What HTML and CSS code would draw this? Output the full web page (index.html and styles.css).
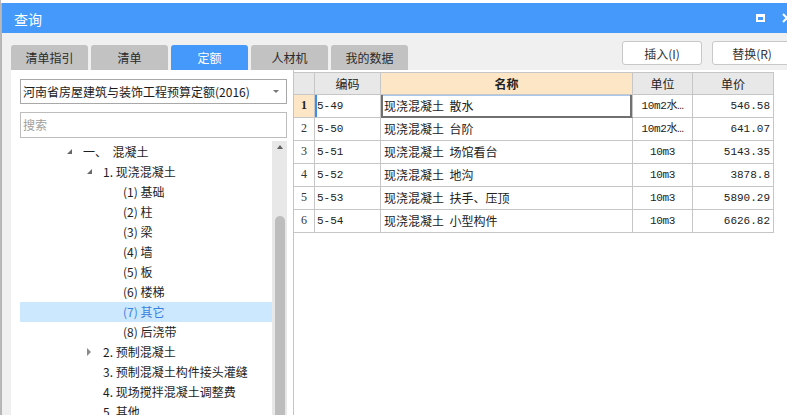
FILE: index.html
```html
<!DOCTYPE html>
<html lang="zh-CN">
<head>
<meta charset="utf-8">
<title>查询</title>
<link rel="stylesheet" href="styles.css">
</head>
<body>
<div class="desk">
  <div class="win">
    <div class="titlebar">
      <span class="title">查询</span>
      <span class="tb-icons">
        <span class="ico-restore"></span>
        <svg class="ico-close" width="10" height="10" viewBox="0 0 10 10"><path d="M1 1 L9 9 M9 1 L1 9" stroke="#fff" stroke-width="2" fill="none"/></svg>
      </span>
    </div>
    <div class="win-body">
      <div class="toprow">
        <div class="tabs">
          <div class="tab">清单指引</div>
          <div class="tab">清单</div>
          <div class="tab active">定额</div>
          <div class="tab">人材机</div>
          <div class="tab">我的数据</div>
        </div>
        <div class="actions">
          <button class="btn">插入(I)</button>
          <button class="btn">替换(R)</button>
        </div>
      </div>
      <div class="main">
        <div class="left">
          <div class="select"><span class="select-text">河南省房屋建筑与装饰工程预算定额(2016)</span><span class="caret"></span></div>
          <div class="search">搜索</div>
          <div class="treewrap">
            <div class="tree">
              <div class="node lv0"><span class="tg"><i class="tri-open"></i></span>一、&nbsp;&nbsp;混凝土</div>
              <div class="node lv1"><span class="tg"><i class="tri-open"></i></span>1. 现浇混凝土</div>
              <div class="node lv2"><span class="tg"></span>(1) 基础</div>
              <div class="node lv2"><span class="tg"></span>(2) 柱</div>
              <div class="node lv2"><span class="tg"></span>(3) 梁</div>
              <div class="node lv2"><span class="tg"></span>(4) 墙</div>
              <div class="node lv2"><span class="tg"></span>(5) 板</div>
              <div class="node lv2"><span class="tg"></span>(6) 楼梯</div>
              <div class="node lv2 selected"><span class="tg"></span>(7) 其它</div>
              <div class="node lv2"><span class="tg"></span>(8) 后浇带</div>
              <div class="node lv1"><span class="tg"><i class="tri-closed"></i></span>2. 预制混凝土</div>
              <div class="node lv1"><span class="tg"></span>3. 预制混凝土构件接头灌缝</div>
              <div class="node lv1"><span class="tg"></span>4. 现场搅拌混凝土调整费</div>
              <div class="node lv1"><span class="tg"></span>5. 其他</div>
            </div>
            <div class="vscroll">
              <span class="up"></span>
              <span class="thumb"></span>
            </div>
          </div>
        </div>
        <div class="right">
          <div class="grid">
            <div class="hc"></div>
            <div class="hc">编码</div>
            <div class="hc hc-sel">名称</div>
            <div class="hc">单位</div>
            <div class="hc">单价</div>

            <div class="c num num-sel">1</div>
            <div class="c code code-focus">5-49</div>
            <div class="c name name-sel">现浇混凝土&nbsp;&nbsp;散水</div>
            <div class="c unit">10m2水…</div>
            <div class="c price">546.58</div>

            <div class="c num">2</div>
            <div class="c code">5-50</div>
            <div class="c name">现浇混凝土&nbsp;&nbsp;台阶</div>
            <div class="c unit">10m2水…</div>
            <div class="c price">641.07</div>

            <div class="c num">3</div>
            <div class="c code">5-51</div>
            <div class="c name">现浇混凝土&nbsp;&nbsp;场馆看台</div>
            <div class="c unit">10m3</div>
            <div class="c price">5143.35</div>

            <div class="c num">4</div>
            <div class="c code">5-52</div>
            <div class="c name">现浇混凝土&nbsp;&nbsp;地沟</div>
            <div class="c unit">10m3</div>
            <div class="c price">3878.8</div>

            <div class="c num">5</div>
            <div class="c code">5-53</div>
            <div class="c name">现浇混凝土&nbsp;&nbsp;扶手、压顶</div>
            <div class="c unit">10m3</div>
            <div class="c price">5890.29</div>

            <div class="c num">6</div>
            <div class="c code">5-54</div>
            <div class="c name">现浇混凝土&nbsp;&nbsp;小型构件</div>
            <div class="c unit">10m3</div>
            <div class="c price">6626.82</div>
          </div>
        </div>
      </div>
    </div>
  </div>
</div>
</body>
</html>
```

FILE: styles.css
```css
* { box-sizing: border-box; }
html, body {
  margin: 0;
  padding: 0;
  width: 787px;
  height: 415px;
  overflow: hidden;
  background: #ffffff;
  font-family: "Noto Sans CJK SC", "Noto Sans", sans-serif;
  font-size: 12px;
  color: #222;
}
.desk {
  width: 787px;
  height: 415px;
  padding: 3px 0 0 1px;
  background: #fff;
  border-left: 1px solid #b8b8b8;
  overflow: hidden;
}
.win {
  width: 800px;
  height: 420px;
  border-left: 1px solid #b4b4b4;
  background: #f0f0f0;
  display: flex;
  flex-direction: column;
  margin-left: -1px;
}
.titlebar {
  height: 30px;
  flex: none;
  background: #4599fb;
  color: #fff;
  display: flex;
  align-items: center;
  padding: 2px 9px 0 12px;
}
.title {
  font-size: 14px;
  line-height: 16px;
}
.tb-icons {
  margin-left: auto;
  display: flex;
  align-items: center;
  gap: 17px;
  margin-top: -3px;
}
.ico-restore {
  display: block;
  width: 9px;
  height: 8px;
  border: 2px solid #fff;
  border-top-width: 3px;
}
.ico-close { display: block; }
.win-body {
  flex: 1;
  display: flex;
  flex-direction: column;
  min-height: 0;
}
.toprow {
  height: 37px;
  flex: none;
  display: flex;
  align-items: flex-start;
  padding: 0 9px;
}
.tabs {
  display: flex;
  gap: 3px;
  margin-top: 12px;
}
.tab {
  width: 77px;
  height: 25px;
  line-height: 25px;
  text-align: center;
  background: #c2c2c2;
  color: #2a2a2a;
  border-radius: 3px 3px 0 0;
  font-size: 12px;
}
.tab.active {
  background: #4599fb;
  color: #fff;
}
.actions {
  margin-left: auto;
  margin-top: 8px;
  display: flex;
  gap: 10px;
}
.btn {
  width: 80px;
  height: 24px;
  background: #fff;
  border: 1px solid #c8c8c8;
  border-radius: 3px;
  font-family: "Noto Sans CJK SC", "Noto Sans", sans-serif;
  font-size: 12px;
  color: #333;
  padding: 0;
}
.main {
  flex: 1;
  display: flex;
  min-height: 0;
  padding-left: 9px;
}
.left {
  width: 282px;
  flex: none;
  background: #fff;
  padding: 9px 6px 0 9px;
  display: flex;
  flex-direction: column;
}
.select {
  height: 25px;
  border: 1px solid #a8a8a8;
  display: flex;
  align-items: center;
  padding: 0 7px 0 2px;
}
.select-text {
  font-size: 12px;
  color: #1a1a1a;
}
.caret {
  margin-left: auto;
  width: 0;
  height: 0;
  border-left: 3px solid transparent;
  border-right: 3px solid transparent;
  border-top: 3px solid #777;
}
.search {
  margin-top: 8px;
  height: 26px;
  border: 1px solid #bdbdbd;
  color: #a0a0a0;
  line-height: 24px;
  padding-left: 2px;
}
.treewrap {
  margin-top: 3px;
  flex: 1;
  display: flex;
  min-height: 0;
}
.tree {
  flex: 1;
  padding-top: 1px;
  overflow: hidden;
}
.node {
  height: 20px;
  line-height: 20px;
  white-space: nowrap;
  display: flex;
  align-items: center;
  color: #1e1e1e;
}
.node.lv0 { padding-left: 47px; }
.node.lv1 { padding-left: 67px; }
.node.lv2 { padding-left: 87px; }
.node.selected {
  background: #cce8ff;
  color: #3a7fde;
}
.tg {
  width: 16px;
  height: 20px;
  flex: none;
  display: flex;
  align-items: center;
}
.tri-open {
  display: block;
  width: 0;
  height: 0;
  border-left: 5px solid transparent;
  border-bottom: 5px solid #686868;
  margin-top: -1px;
}
.tri-closed {
  display: block;
  width: 0;
  height: 0;
  border-left: 4px solid #8a8a8a;
  border-top: 4px solid transparent;
  border-bottom: 4px solid transparent;
}
.vscroll {
  width: 15px;
  flex: none;
  background: #e8e8e8;
  display: flex;
  flex-direction: column;
  align-items: center;
}
.up {
  display: block;
  width: 0;
  height: 0;
  margin-top: 4px;
  border-left: 3px solid transparent;
  border-right: 3px solid transparent;
  border-bottom: 4px solid #606060;
}
.thumb {
  display: block;
  width: 10px;
  flex: 1;
  margin-top: 67px;
  background: #bdbdbd;
  border-radius: 5px 5px 0 0;
}
.right {
  flex: 1;
  background: #fff;
  border-left: 1px solid #c4c4c4;
  padding-top: 2px;
}
.grid {
  display: grid;
  grid-template-columns: 21px 66px 252px 60px 81px;
  grid-auto-rows: 23px;
  grid-template-rows: 22px;
  width: 480px;
  border-top: 1px solid #c6c6c6;
}
.hc, .c {
  border-right: 1px solid #c6c6c6;
  border-bottom: 1px solid #c6c6c6;
  white-space: nowrap;
  overflow: hidden;
  line-height: 21px;
}
.hc {
  background: #e8e8e8;
  text-align: center;
  color: #222;
}
.hc-sel {
  background: #fde6c6;
  font-weight: bold;
}
.c.num {
  text-align: center;
  font-family: "Liberation Serif", serif;
  font-size: 12px;
  color: #333;
}
.c.num-sel {
  background: #fde6c6;
  font-weight: bold;
  color: #222;
}
.c.code {
  padding-left: 2px;
  font-family: "Liberation Mono", monospace;
  font-size: 11px;
  line-height: 22px;
}
.code-focus {
  box-shadow: inset 2px 0 #3d8fea;
}
.c.name {
  padding-left: 3px;
}
.name-sel {
  box-shadow: inset 2px 0 #707070, inset -2px 0 #707070, inset 0 -1px #707070, inset 0 1px #a8c8ee;
  border-bottom-color: #707070;
}
.c.unit {
  text-align: center;
  font-family: "Liberation Mono", "Noto Sans CJK SC", monospace;
  font-size: 11px;
  line-height: 22px;
  letter-spacing: -0.3px;
}
.c.price {
  text-align: right;
  padding-right: 3px;
  font-family: "Liberation Mono", monospace;
  font-size: 11px;
  line-height: 22px;
}
```
